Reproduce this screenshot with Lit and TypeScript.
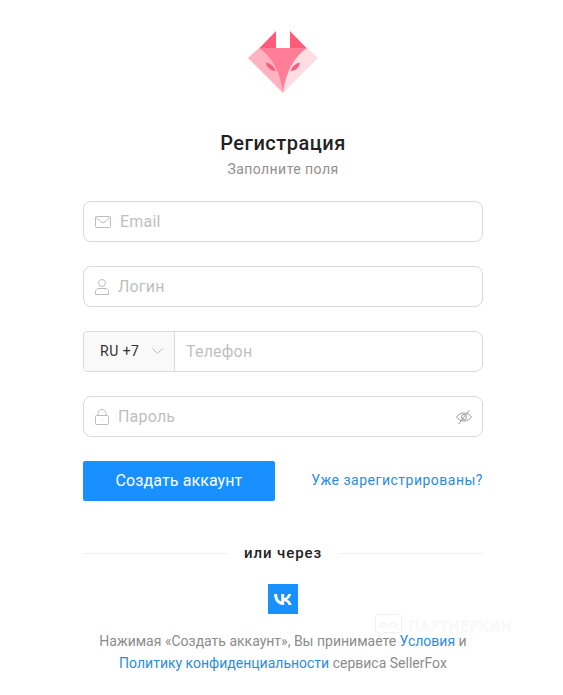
import { LitElement, html, css } from 'lit';
import { customElement } from 'lit/decorators.js';

@customElement('app-root')
export class AppRoot extends LitElement {
  static styles = css`
    :host {
      display: block;
      position: relative;
      height: 695px;
      overflow: hidden;
      background: #fff;
      font-family: Roboto, "Liberation Sans", sans-serif;
      color: #222;
    }
    .page {
      display: flex;
      flex-direction: column;
      align-items: center;
      padding: 30px 0 0 3px;
    }
    .logo {
      display: block;
      width: 70px;
      height: 64px;
    }
    h1 {
      margin: 36px 0 0;
      font-size: 20px;
      line-height: 26px;
      font-weight: 500;
      letter-spacing: 0.5px;
      color: #222;
    }
    .sub {
      margin-top: 3px;
      font-size: 14px;
      line-height: 20px;
      letter-spacing: 0.45px;
      color: #8f8f8f;
    }
    form {
      width: 400px;
      margin-top: 22px;
      display: flex;
      flex-direction: column;
      gap: 24px;
    }
    .field {
      box-sizing: border-box;
      height: 41px;
      border: 1px solid #d9d9d9;
      border-radius: 8px;
      display: flex;
      align-items: center;
      padding-left: 11px;
      font-size: 16px;
      letter-spacing: 0.2px;
      color: #bfbfbf;
    }
    .field svg {
      flex: none;
      fill: none;
      stroke: #bdbdbd;
      stroke-width: 1;
    }
    .label {
      margin-left: 9px;
    }
    .phone {
      padding-left: 0;
      border-radius: 4px 8px 8px 4px;
    }
    .code {
      box-sizing: border-box;
      width: 91px;
      height: 39px;
      flex: none;
      display: flex;
      align-items: center;
      padding: 0 0 2px 16px;
      gap: 12px;
      background: #f9f9f9;
      border-right: 1px solid #d9d9d9;
      border-radius: 3px 0 0 3px;
      color: #333;
      font-size: 14px;
      letter-spacing: 0.5px;
    }
    .phone .label {
      margin-left: 11px;
    }
    .field .eye {
      margin-left: auto;
      margin-right: 10px;
      stroke: #9a9a9a;
    }
    .actions {
      display: flex;
      justify-content: space-between;
      align-items: center;
    }
    .submit {
      width: 192px;
      height: 40px;
      border: 0;
      border-radius: 2px;
      background: #1890ff;
      color: #fff;
      font: 400 16px/40px Roboto, "Liberation Sans", sans-serif;
      letter-spacing: 0.1px;
      padding: 0;
    }
    .link {
      color: #2d8cdc;
      text-decoration: none;
    }
    .login {
      font-size: 14px;
      letter-spacing: 0.5px;
      position: relative;
      top: -1px;
    }
    .divider {
      width: 400px;
      margin-top: 42px;
      display: flex;
      align-items: center;
      gap: 16px;
      font-size: 15px;
      font-weight: 500;
      letter-spacing: 0.9px;
      line-height: 20px;
    }
    .divider::before,
    .divider::after {
      content: "";
      flex: 1;
      height: 1px;
      background: #f0f0f0;
    }
    .vk {
      margin-top: 21px;
      width: 30px;
      height: 30px;
      background: #1890ff;
      display: flex;
      align-items: center;
      justify-content: center;
    }
    .terms {
      margin-top: 16px;
      width: 400px;
      text-align: center;
      font-size: 14px;
      line-height: 22px;
      color: #8c8c8c;
    }
    .watermark {
      position: absolute;
      left: 375px;
      top: 614px;
      display: flex;
      align-items: center;
      gap: 7px;
      height: 24px;
    }
    .watermark span {
      font: 400 14px/20px "DejaVu Sans", sans-serif;
      letter-spacing: 0.7px;
      color: transparent;
      -webkit-text-stroke: 0.3px #eeeeee;
    }
  `;

  render() {
    return html`
      <div class="page">
        <svg class="logo" viewBox="0 0 70 64">
          <polygon points="11,18.500 28,1 28,18.500" fill="#ff5c7c" />
          <polygon points="42,1 59,18.500 42,18.500" fill="#ff5c7c" />
          <polygon points="11,18 35,18 35,63 0,28" fill="#ffb3c1" />
          <polygon points="59,18 35,18 35,63 70,28" fill="#ffdde3" />
          <path d="M11 18H59C47 26 38 40 35 63C32 40 23 26 11 18Z" fill="#ff7d96" />
          <path d="M18 32.500C23 33.500 26 36.500 27.500 41C22.500 41 19 38 18 32.500Z" fill="#f5607f" />
          <path d="M52 32.500C47 33.500 44 36.500 42.500 41C47.500 41 51 38 52 32.500Z" fill="#f5607f" />
        </svg>
        <h1>Регистрация</h1>
        <div class="sub">Заполните поля</div>
        <form>
          <div class="field">
            <svg width="16" height="12" viewBox="0 0 16 12">
              <rect x="0.5" y="0.5" width="15" height="11" rx="1" />
              <path d="M1 1.500L8 7L15 1.500" />
            </svg>
            <span class="label">Email</span>
          </div>
          <div class="field">
            <svg width="14" height="16" viewBox="0 0 14 16">
              <circle cx="7" cy="4" r="3.500" />
              <path d="M0.500 15.500V12.500C0.500 10.500 2 9.500 4 9.500H10C12 9.500 13.500 10.500 13.500 12.500V15.500Z" />
            </svg>
            <span class="label">Логин</span>
          </div>
          <div class="field phone">
            <div class="code">
              RU +7
              <svg width="11" height="6" viewBox="0 0 11 6"><path d="M0.500 0.500L5.500 5.500L10.500 0.500" /></svg>
            </div>
            <span class="label">Телефон</span>
          </div>
          <div class="field">
            <svg width="14" height="16" viewBox="0 0 14 16">
              <rect x="0.500" y="6.500" width="13" height="9" rx="1" />
              <path d="M3 6.500V4.500C3 2 4.800 0.500 7 0.500C9.200 0.500 11 2 11 4.500V6.500" />
              <path d="M7 10.500V11.500" />
            </svg>
            <span class="label">Пароль</span>
            <svg class="eye" width="16" height="16" viewBox="0 0 16 16">
              <path d="M0.500 8C2.500 5.300 5 4 8 4C11 4 13.500 5.300 15.500 8C13.500 10.700 11 12 8 12C5 12 2.500 10.700 0.500 8Z" />
              <circle cx="8" cy="8" r="2.500" />
              <path d="M2.500 15L13.500 1" />
            </svg>
          </div>
          <div class="actions">
            <button class="submit" type="button">Создать аккаунт</button>
            <a class="link login" href="#">Уже зарегистрированы?</a>
          </div>
        </form>
        <div class="divider">или через</div>
        <div class="vk">
          <svg width="18" height="11" viewBox="0 0 18 11">
            <path fill="#fff" d="M9.800 11C3.600 11 0.300 6.800 0 0H3.100C3.300 5 5.500 7.100 7.200 7.500V0H10.200V4.300C11.900 4.100 13.600 2.200 14.200 0H17.100C16.600 2.700 14.600 4.700 13.200 5.500C14.600 6.200 16.900 7.900 17.800 11H14.600C13.900 8.900 12.200 7.300 10.200 7.100V11Z" />
          </svg>
        </div>
        <div class="terms">
          Нажимая «Создать аккаунт», Вы принимаете <a class="link" href="#">Условия</a> и<br />
          <a class="link" href="#">Политику конфиденциальности</a> сервиса SellerFox
        </div>
      </div>
      <div class="watermark">
        <svg width="27" height="24" viewBox="0 0 27 24" fill="none" stroke="#f0f0f0">
          <path d="M3 0.500H24C25 0.500 26.500 1.500 26.500 3V16C26.500 17.500 25 18.500 24 18.500H9L4.500 23.500V18.500H3C1.500 18.500 0.500 17.500 0.500 16V3C0.500 1.500 1.500 0.500 3 0.500Z" />
          <rect x="5" y="9" width="7" height="3.500" rx="1.750" />
          <rect x="15" y="9" width="7" height="3.500" rx="1.750" />
        </svg>
        <span>ПАРТНЕРКИН</span>
      </div>
    `;
  }
}
